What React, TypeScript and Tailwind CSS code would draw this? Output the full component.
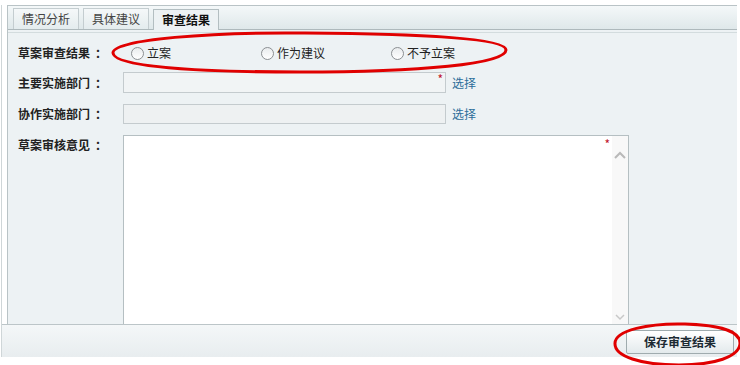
import React from 'react';

const font = { fontFamily: '"Noto Sans CJK SC", "Noto Sans", sans-serif' };

function Radio({ label, width }: { label: string; width: string }) {
  return (
    <label className={`flex items-center gap-[3px] ${width}`}>
      <span className="w-[13px] h-[13px] rounded-full border border-[#8b8f92] bg-gradient-to-b from-[#e9ecee] to-white shrink-0" />
      <span className="text-[12px] text-[#222]">{label}</span>
    </label>
  );
}

function Label({ text, className = '' }: { text: string; className?: string }) {
  return (
    <div className={`w-[105px] text-[12px] font-bold text-[#222] ${className}`}>
      {text}
      <span className="pl-[5px]">：</span>
    </div>
  );
}

export default function App() {
  const tabs = ['情况分析', '具体建议', '审查结果'];

  return (
    <div className="relative w-[740px] h-[365px] bg-white overflow-hidden" style={font}>
      <div className="pt-[5px] pl-[1px] w-[737px]">
        <div className="border-l border-[#cfd6d8]">
          {/* panel */}
          <div className="ml-[5px] border-l border-t border-[#b9c3c6] bg-[#edf2f4]">
            {/* tab bar */}
            <div className="h-[24px] flex items-end gap-[4px] pl-[5px] bg-gradient-to-b from-[#f4f8f9] to-[#dfe8ea] border-b border-[#aeb9bc]">
              {tabs.map((t, i) => (
                <div
                  key={t}
                  className={
                    i === 2
                      ? 'relative -mb-px h-[21px] px-[8px] flex items-center border border-b-0 border-[#b3bec1] bg-[#edf2f4] text-[12px] font-bold text-[#111]'
                      : 'h-[21px] px-[8px] flex items-center border border-b-0 border-[#c4cdd0] bg-gradient-to-b from-[#f5f8f9] to-[#e4ecee] text-[12px] text-[#444]'
                  }
                >
                  {t}
                </div>
              ))}
            </div>
            <div className="h-[3px] border-b border-[#d3dcde]" />

            {/* form */}
            <div className="pt-[9px] pl-[10px]">
              <div className="h-[22px] flex items-center">
                <Label text="草案审查结果" />
                <div className="flex items-center pl-[8px]">
                  <Radio label="立案" width="w-[130px]" />
                  <Radio label="作为建议" width="w-[130px]" />
                  <Radio label="不予立案" width="w-[120px]" />
                </div>
              </div>

              <div className="mt-[8px] h-[21px] flex items-center">
                <Label text="主要实施部门" />
                <div className="relative w-[323px] h-[21px] border border-[#c4cbce] bg-[#f1f4f5]">
                  <span className="absolute right-[2px] top-[-1px] text-[12px] leading-[14px] text-[#c0142a]">*</span>
                </div>
                <span className="ml-[6px] text-[12px] text-[#2b6d99]">选择</span>
              </div>

              <div className="mt-[11px] h-[20px] flex items-center">
                <Label text="协作实施部门" />
                <div className="w-[323px] h-[20px] border border-[#c4cbce] bg-[#eef1f2]" />
                <span className="ml-[6px] text-[12px] text-[#2b6d99]">选择</span>
              </div>

              <div className="mt-[11px] flex items-start">
                <Label text="草案审核意见" className="pt-[1px]" />
                <div className="relative w-[506px] h-[189px] border border-b-0 border-[#b5bfc2] bg-white flex justify-end">
                  <span className="absolute right-[18px] top-[1px] text-[12px] leading-[14px] text-[#c0142a]">*</span>
                  <div className="w-[16px] h-full bg-[#f8f8f8] flex flex-col items-center justify-between pt-[15px] pb-[3px]">
                    <svg width="12" height="8" viewBox="0 0 12 8">
                      <path d="M1 7 L6 2 L11 7" fill="none" stroke="#b9b9b9" strokeWidth="2" />
                    </svg>
                    <svg width="10" height="7" viewBox="0 0 10 7">
                      <path d="M1 1 L5 5 L9 1" fill="none" stroke="#c8c8c8" strokeWidth="1.5" />
                    </svg>
                  </div>
                </div>
              </div>
            </div>
          </div>

          {/* footer */}
          <div className="h-[33px] border-t border-[#bcc5c8] bg-gradient-to-b from-[#f4f7f8] to-[#e8edef] flex justify-end items-start pt-[5px] pr-[3px]">
            <button className="w-[108px] h-[24px] border border-[#9fabae] rounded-[2px] bg-gradient-to-b from-white to-[#e3eaec] text-[12px] font-bold text-[#1c2a33]">
              保存审查结果
            </button>
          </div>
        </div>
      </div>

      {/* hand-drawn red marks */}
      <svg className="absolute inset-0 pointer-events-none" width="740" height="365" viewBox="0 0 740 365">
        <path
          d="M113,53 C112,39 215,32 305,33 C420,34 506,38 506,50 C506,64 420,72 300,72 C190,72 114,66 113,53 Z"
          fill="none"
          stroke="#e00000"
          strokeWidth="3"
        />
        <path
          d="M615,344 C614,330 650,323 685,324 C722,325 740,332 740,343 C740,357 714,365 679,365 C640,365 615,356 615,344 Z"
          fill="none"
          stroke="#e00000"
          strokeWidth="3"
        />
      </svg>
    </div>
  );
}
